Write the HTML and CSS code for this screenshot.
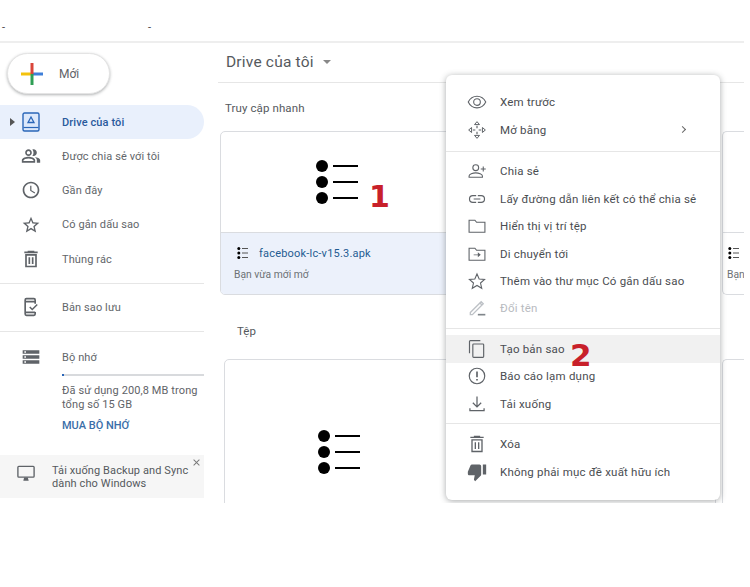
FILE: index.html
```html
<!DOCTYPE html>
<html lang="en">
    <head>
        <meta charset="UTF-8">
        <meta name="viewport" content="width=device-width, initial-scale=1.0">
        <title>Drive của tôi</title>
        <link rel="stylesheet" href="styles.css">
    </head>
    <body>
        <div class="app">
            <div class="topbar"><span class="tick">-</span><span class="tick tick-2">-</span></div>
            <div class="content">
                <div class="sidebar">
                    <button class="new-button">
                        <svg class="plus" width="22" height="22" viewBox="0 0 22 22"><path d="M0 11h11" stroke="#f4c20d" stroke-width="3"/><path d="M11 11h11" stroke="#3f7fd9" stroke-width="3"/><path d="M11 0v11" stroke="#d9453a" stroke-width="3"/><path d="M11 11v11" stroke="#2f9e55" stroke-width="3"/></svg>
                        <span>Mới</span>
                    </button>
                    <div class="nav-row nav-active">
                        <span class="caret"></span>
                        <svg class="nav-icon" viewBox="0 0 20 20"><rect x="2" y="1" width="16" height="18" rx="1.5" fill="#dce8fb" stroke="#2a66b8" stroke-width="1.4"/><path d="M2.5 15.5h15" stroke="#2a66b8" stroke-width="1.2"/><path d="M10 5l3 5.5H7z" fill="none" stroke="#2a66b8" stroke-width="1.3"/></svg>
                        <span>Drive của tôi</span>
                    </div>
                    <div class="nav-row">
                        <svg class="nav-icon" viewBox="0 0 24 24"><path d="M16.67 13.13C18.04 14.06 19 15.32 19 17v3h4v-3c0-2.18-3.57-3.47-6.33-3.87zM15 12c2.21 0 4-1.79 4-4s-1.79-4-4-4c-.47 0-.91.1-1.33.24C14.5 5.27 15 6.58 15 8s-.5 2.73-1.33 3.76c.42.14.86.24 1.33.24zM9 12c2.21 0 4-1.79 4-4s-1.79-4-4-4-4 1.79-4 4 1.79 4 4 4zm0-6c1.1 0 2 .9 2 2s-.9 2-2 2-2-.9-2-2 .9-2 2-2zm0 7c-2.67 0-8 1.34-8 4v3h16v-3c0-2.66-5.33-4-8-4zm6 5H3v-.99C3.2 16.29 6.3 15 9 15s5.8 1.29 6 2v1z"/></svg>
                        <span>Được chia sẻ với tôi</span>
                    </div>
                    <div class="nav-row">
                        <svg class="nav-icon" viewBox="0 0 24 24"><path d="M11.99 2C6.47 2 2 6.48 2 12s4.47 10 9.99 10C17.52 22 22 17.52 22 12S17.52 2 11.99 2zM12 20c-4.42 0-8-3.58-8-8s3.58-8 8-8 8 3.58 8 8-3.58 8-8 8zm.5-13H11v6l5.25 3.15.75-1.23-4.5-2.67z"/></svg>
                        <span>Gần đây</span>
                    </div>
                    <div class="nav-row">
                        <svg class="nav-icon" viewBox="0 0 24 24"><path d="M22 9.24l-7.19-.62L12 2 9.19 8.63 2 9.24l5.46 4.73L5.82 21 12 17.27 18.18 21l-1.63-7.03L22 9.24zM12 15.4l-3.76 2.27 1-4.28-3.32-2.88 4.38-.38L12 6.1l1.71 4.04 4.38.38-3.32 2.88 1 4.28L12 15.4z"/></svg>
                        <span>Có gắn dấu sao</span>
                    </div>
                    <div class="nav-row">
                        <svg class="nav-icon" viewBox="0 0 24 24"><path d="M6 7h12v14H6zM4 4h16M9 4V3h6v1M10 10v8M14 10v8" fill="none" stroke="#5f6368" stroke-width="2"/></svg>
                        <span>Thùng rác</span>
                    </div>
                    <hr class="side-line">
                    <div class="nav-row">
                        <svg class="nav-icon" viewBox="0 0 24 24"><path d="M17 8V3.5A1.5 1.5 0 0 0 15.5 2h-9A1.5 1.5 0 0 0 5 3.5v17A1.5 1.5 0 0 0 6.5 22h9a1.5 1.5 0 0 0 1.5-1.5V18M5 5.5h12M5 18.5h12" fill="none" stroke="#5f6368" stroke-width="2"/><path d="M10.5 12l3 3 6-6" fill="none" stroke="#5f6368" stroke-width="1.8"/></svg>
                        <span>Bản sao lưu</span>
                    </div>
                    <hr class="side-line side-line-2">
                    <div class="nav-row storage-row">
                        <svg class="nav-icon" viewBox="0 0 24 24"><path d="M2 20h20v-4H2v4zm2-3h2v2H4v-2zM2 4v4h20V4H2zm4 3H4V5h2v2zm-4 7h20v-4H2v4zm2-3h2v2H4v-2z"/></svg>
                        <span>Bộ nhớ</span>
                    </div>
                    <div class="storage">
                        <div class="storage-bar"><div class="storage-used" style="width: 2px"></div></div>
                        <p class="storage-text">Đã sử dụng 200,8 MB trong tổng số 15 GB</p>
                        <div class="storage-buy">MUA BỘ NHỚ</div>
                    </div>
                    <div class="backup-banner">
                        <svg class="banner-icon" viewBox="0 0 20 18"><rect x="1" y="1" width="18" height="12" rx="1" fill="none" stroke="#5f6368" stroke-width="1.5"/><path d="M7 17h6l-1-3.5H8z" fill="#5f6368"/></svg>
                        <span>Tải xuống Backup and Sync dành cho Windows</span>
                        <svg class="banner-close" viewBox="0 0 24 24"><path d="M19 6.41L17.59 5 12 10.59 6.41 5 5 6.41 10.59 12 5 17.59 6.41 19 12 13.41 17.59 19 19 17.59 13.41 12z"/></svg>
                    </div>
                </div>
                <div class="main">
                    <div class="title-row">
                        <span class="title">Drive của tôi</span>
                        <span class="title-caret"></span>
                    </div>
                    <div class="quick-label">Truy cập nhanh</div>
                    <div class="card-row">
                        <div class="card card-first">
                            <div class="thumb">
                                <svg class="list-big" width="44" height="44" viewBox="0 0 44 44"><circle cx="7" cy="6" r="6"/><circle cx="7" cy="22" r="6"/><circle cx="7" cy="38" r="6"/><path d="M18 6h25M18 22h25M18 38h25" stroke="#000" stroke-width="2"/></svg>
                                <span class="mark mark-1">1</span>
                            </div>
                            <div class="card-foot card-foot-on">
                                <div class="file-name">
                                    <svg class="list-small" width="11" height="12" viewBox="0 0 11 12"><circle cx="1.8" cy="1.5" r="1.5"/><circle cx="1.8" cy="6" r="1.5"/><circle cx="1.8" cy="10.5" r="1.5"/><path d="M5 1.5h6M5 6h6M5 10.5h6" stroke="#555" stroke-width="1"/></svg>
                                    <span>facebook-lc-v15.3.apk</span>
                                </div>
                                <div class="file-note">Bạn vừa mới mở</div>
                            </div>
                        </div>
                        <div class="card card-next">
                            <div class="thumb"></div>
                            <div class="card-foot">
                                <div class="file-name">
                                    <svg class="list-small" width="11" height="12" viewBox="0 0 11 12"><circle cx="1.8" cy="1.5" r="1.5"/><circle cx="1.8" cy="6" r="1.5"/><circle cx="1.8" cy="10.5" r="1.5"/><path d="M5 1.5h6M5 6h6M5 10.5h6" stroke="#555" stroke-width="1"/></svg>
                                </div>
                                <div class="file-note">Bạn</div>
                            </div>
                        </div>
                    </div>
                    <div class="files-label">Tệp</div>
                    <div class="card-row card-row-files">
                        <div class="card file-card">
                            <svg class="list-big" width="44" height="44" viewBox="0 0 44 44"><circle cx="7" cy="6" r="6"/><circle cx="7" cy="22" r="6"/><circle cx="7" cy="38" r="6"/><path d="M18 6h25M18 22h25M18 38h25" stroke="#000" stroke-width="2"/></svg>
                        </div>
                        <div class="card card-next"></div>
                    </div>
                </div>
            </div>

            <div class="menu">
                <div class="menu-group">
                    <div class="menu-item"><svg viewBox="0 0 24 24"><path d="M12 5C7.5 5 3.500 7.800 1.500 12c2 4.200 6 7 10.500 7s8.500-2.800 10.500-7c-2-4.200-6-7-10.500-7z" fill="none" stroke="#5f6368" stroke-width="1.3"/><circle cx="12" cy="12" r="4" fill="none" stroke="#5f6368" stroke-width="1.3"/></svg><span>Xem trước</span></div>
                    <div class="menu-item"><svg viewBox="0 0 24 24"><path d="M12 2L9 5.5h6zM12 22l3-3.500H9zM2 12l3.500 3V9zM22 12l-3.500-3v6z" fill="none" stroke="#5f6368" stroke-width="1.2"/><path d="M12 7v3M12 14v3M7 12h3M14 12h3" stroke="#5f6368" stroke-width="1.4"/></svg><span>Mở bằng</span><span class="menu-more"></span></div>
                </div>
                <div class="menu-group">
                    <div class="menu-item"><svg viewBox="0 0 24 24"><circle cx="10.5" cy="8" r="3.5" fill="none" stroke="#5f6368" stroke-width="1.3"/><path d="M2.5 19.5V18c0-2.200 4.500-3.800 8-3.800s8 1.600 8 3.800v1.500z" fill="none" stroke="#5f6368" stroke-width="1.3"/><path d="M19.5 6.5v6M16.5 9.5h6" stroke="#5f6368" stroke-width="1.3"/></svg><span>Chia sẻ</span></div>
                    <div class="menu-item"><svg viewBox="0 0 24 24"><path d="M11 8H7a4 4 0 0 0 0 8h4M13 8h4a4 4 0 0 1 0 8h-4M8 12h8" fill="none" stroke="#5f6368" stroke-width="1.4"/></svg><span>Lấy đường dẫn liên kết có thể chia sẻ</span></div>
                    <div class="menu-item"><svg viewBox="0 0 24 24"><path d="M2.5 19.5V5h7l2 2.5h10v12z" fill="none" stroke="#5f6368" stroke-width="1.3"/></svg><span>Hiển thị vị trí tệp</span></div>
                    <div class="menu-item"><svg viewBox="0 0 24 24"><path d="M2.5 19.5V5h7l2 2.5h10v12z" fill="none" stroke="#5f6368" stroke-width="1.3"/><path d="M8 12.5h5V10l3.500 3-3.500 3v-2.500H8z" fill="#5f6368"/></svg><span>Di chuyển tới</span></div>
                    <div class="menu-item"><svg viewBox="0 0 24 24"><path d="M12 3.500l2.600 6 6.500.6-4.900 4.300 1.500 6.400-5.700-3.400-5.700 3.400 1.500-6.400-4.900-4.300 6.500-.6z" fill="none" stroke="#5f6368" stroke-width="1.3"/></svg><span>Thêm vào thư mục Có gắn dấu sao</span></div>
                    <div class="menu-item menu-off"><svg viewBox="0 0 24 24"><path d="M4 17.500L15.500 6 18 8.500 6.500 20H4zM15.500 6L17 4.500 19.500 7 18 8.500" fill="none" stroke="#bdc1c6" stroke-width="1.6"/><path d="M13 19h9v2h-9z" fill="#80868b"/></svg><span>Đổi tên</span></div>
                </div>
                <div class="menu-group">
                    <div class="menu-item menu-hover"><svg viewBox="0 0 24 24"><path d="M3 17V3a1 1 0 0 1 1-1h12" fill="none" stroke="#5f6368" stroke-width="1.4"/><rect x="7" y="6" width="13" height="16" rx="1" fill="none" stroke="#5f6368" stroke-width="1.4"/></svg><span>Tạo bản sao</span><span class="mark mark-2">2</span></div>
                    <div class="menu-item"><svg viewBox="0 0 24 24"><circle cx="12" cy="12" r="9.3" fill="none" stroke="#5f6368" stroke-width="1.4"/><path d="M11 6.500h2v7h-2zM11 15.500h2v2h-2z" fill="#5f6368"/></svg><span>Báo cáo lạm dụng</span></div>
                    <div class="menu-item"><svg viewBox="0 0 24 24"><path d="M12 3v12M7 10.500l5 5 5-5M3.500 17v3h17v-3" fill="none" stroke="#5f6368" stroke-width="1.5"/></svg><span>Tải xuống</span></div>
                </div>
                <div class="menu-group">
                    <div class="menu-item"><svg viewBox="0 0 24 24"><path d="M6 7h12v14H6zM4 4h16M9 4V3h6v1M10 10v8M14 10v8" fill="none" stroke="#5f6368" stroke-width="1.6"/></svg><span>Xóa</span></div>
                    <div class="menu-item"><svg viewBox="0 0 24 24"><path d="M15 3H6c-.83 0-1.54.5-1.84 1.22l-3.02 7.05c-.09.23-.14.47-.14.73v2c0 1.100.9 2 2 2h6.310l-.95 4.570-.03.32c0 .41.17.79.44 1.060L9.830 23l6.590-6.590c.36-.36.58-.86.58-1.410V5c0-1.100-.9-2-2-2zm4 0v12h4V3h-4z"/></svg><span>Không phải mục đề xuất hữu ích</span></div>
                </div>
            </div>
        </div>
    </body>
</html>
```

FILE: styles.css
```css
* { box-sizing: border-box; }
html, body { margin: 0; background: white; }
body {
    font-family: Roboto, "Liberation Sans", sans-serif;
    font-size: 12px;
    color: #5f6368;
}
.app {
    position: relative;
    width: 744px;
    height: 503px;
    overflow: hidden;
}
.topbar {
    height: 43px;
    border-bottom: 2px solid #eeeeee;
    display: flex;
    padding-left: 2px;
    padding-top: 20px;
    color: #444;
    font-size: 11px;
    line-height: 16px;
}
.tick-2 { margin-left: 143px; }
.content {
    display: flex;
    height: 460px;
}

/* left column */
.sidebar {
    width: 218px;
    flex-shrink: 0;
    padding-right: 14px;
    position: relative;
}
.new-button {
    display: flex;
    align-items: center;
    width: 103px;
    height: 41px;
    margin: 10px 0 11px 7px;
    padding: 0 0 0 13px;
    border: 1px solid #e4e4e4;
    border-radius: 21px;
    background: white;
    box-shadow: 0 1px 3px rgba(60, 64, 67, 0.4);
    font-family: inherit;
    font-size: 12px;
    color: #5f6368;
}
.plus { margin-right: 16px; }
.nav-row {
    display: flex;
    align-items: center;
    height: 34.3px;
    padding-left: 21px;
    font-size: 11px;
    letter-spacing: 0.1px;
    color: #62666a;
}
.nav-active {
    padding-left: 10px;
    height: 34px;
    background: #e9f0fc;
    border-radius: 0 18px 18px 0;
    color: #2a5a9c;
    font-weight: 500;
}
.caret {
    width: 0;
    height: 0;
    margin-right: 6px;
    border-left: 5px solid #555;
    border-top: 4px solid transparent;
    border-bottom: 4px solid transparent;
}
.nav-icon {
    width: 20px;
    height: 20px;
    margin-right: 21px;
    fill: #5f6368;
    flex-shrink: 0;
}
.side-line {
    margin: 7px 0 6px;
    border: none;
    border-top: 1px solid #e6e6e6;
}
.side-line-2 { margin: 7px 0 9px; }
.storage-row { height: 32px; }
.storage { padding-left: 62px; }
.storage-bar {
    height: 2px;
    margin-top: 1px;
    background: #d8dadd;
}
.storage-used {
    height: 2px;
    background: #2a66b8;
}
.storage-text {
    margin: 8px 0 0;
    font-size: 11px;
    line-height: 14px;
    letter-spacing: 0.1px;
}
.storage-buy {
    margin-top: 7px;
    font-size: 11px;
    line-height: 14px;
    font-weight: 500;
    color: #3a6ea8;
}
.backup-banner {
    position: relative;
    display: flex;
    align-items: center;
    height: 43px;
    margin-top: 21.5px;
    padding-left: 17px;
    background: #f6f6f6;
    font-size: 11px;
    line-height: 12.5px;
    letter-spacing: 0.1px;
    color: #55595d;
}
.banner-icon {
    width: 18px;
    height: 17px;
    margin: 0 17px 5px 0;
    flex-shrink: 0;
}
.backup-banner span {
    width: 140px;
    padding-top: 3px;
}
.banner-close {
    position: absolute;
    right: 2px;
    top: 2px;
    width: 11px;
    height: 11px;
    fill: #777;
}

/* files area */
.main {
    flex: 1;
    min-width: 0;
    overflow: hidden;
}
.title-row {
    display: flex;
    align-items: center;
    height: 40px;
    padding: 0 0 2px 8px;
    border-bottom: 1px solid #e6e6e6;
}
.title {
    font-size: 15.5px;
    letter-spacing: 0.2px;
    color: #55595d;
}
.title-caret {
    width: 0;
    height: 0;
    margin-left: 9px;
    border-top: 4px solid #888;
    border-left: 4px solid transparent;
    border-right: 4px solid transparent;
}
.quick-label {
    padding: 17px 0 0 7px;
    height: 48px;
    line-height: 16px;
    font-size: 11.5px;
    letter-spacing: 0.1px;
    color: #55595d;
}
.card-row {
    display: flex;
    gap: 6px;
    width: 620px;
    padding-left: 2px;
}
.card {
    flex-shrink: 0;
    border: 1px solid #dadce0;
    border-radius: 5px;
    overflow: hidden;
    position: relative;
}
.card-first { width: 496px; height: 164px; }
.card-next {
    width: 100px;
    border-right: none;
}
.thumb {
    display: flex;
    height: 101px;
    padding: 28px 0 0 94px;
    border-bottom: 1px solid #dadce0;
}
.mark {
    position: absolute;
    font-family: "DejaVu Sans", sans-serif;
    font-weight: bold;
    font-size: 30px;
    line-height: 24px;
    color: #c8202a;
}
.mark-1 { left: 148px; top: 53px; }
.mark-2 { left: 124px; top: 8px; font-size: 31px; }
.card-foot {
    height: 61px;
    padding: 10px 0 0 13px;
}
.card-foot-on { background: #ecf1fb; }
.file-name {
    display: flex;
    align-items: center;
    height: 20px;
    padding-left: 3px;
    font-size: 11px;
    letter-spacing: 0.2px;
    color: #1f5c92;
}
.list-small { margin-right: 11px; flex-shrink: 0; }
.file-note {
    margin-top: 4px;
    font-size: 10.3px;
    line-height: 16px;
    color: #6d7175;
}
.card-next .card-foot { padding-left: 4px; }
.card-next .file-name { padding-left: 1px; }
.files-label {
    height: 64px;
    padding: 28px 0 0 19px;
    line-height: 16px;
    font-size: 11.5px;
    color: #55595d;
}
.card-row-files {
    padding-left: 6px;
    height: 160px;
}
.file-card {
    width: 492px;
    height: 160px;
    padding: 70px 0 0 92px;
}

/* context menu */
.menu {
    position: absolute;
    left: 446px;
    top: 75px;
    width: 274px;
    height: 425px;
    padding-top: 6px;
    background: white;
    border-radius: 6px;
    box-shadow: 0 1px 6px rgba(60, 64, 67, 0.45);
}
.menu-group {
    padding: 6px 0;
    border-bottom: 1px solid #e6e6e6;
}
.menu-group:first-child { padding: 7.5px 0; }
.menu-group:last-child {
    padding-top: 6.5px;
    border-bottom: none;
}
.menu-item {
    position: relative;
    display: flex;
    align-items: center;
    height: 27.4px;
    padding-left: 21px;
    font-size: 11.5px;
    letter-spacing: 0.2px;
    color: #4a4d51;
}
.menu-item svg {
    width: 20px;
    height: 20px;
    margin-right: 13px;
    fill: #5f6368;
    flex-shrink: 0;
}
.menu-off { color: #b8bbbf; }
.menu-hover { background: #f1f1f1; }
.menu-more {
    position: absolute;
    right: 35px;
    top: 11px;
    width: 5px;
    height: 5px;
    border-top: 1px solid #666;
    border-right: 1px solid #666;
    transform: rotate(45deg);
}
```
